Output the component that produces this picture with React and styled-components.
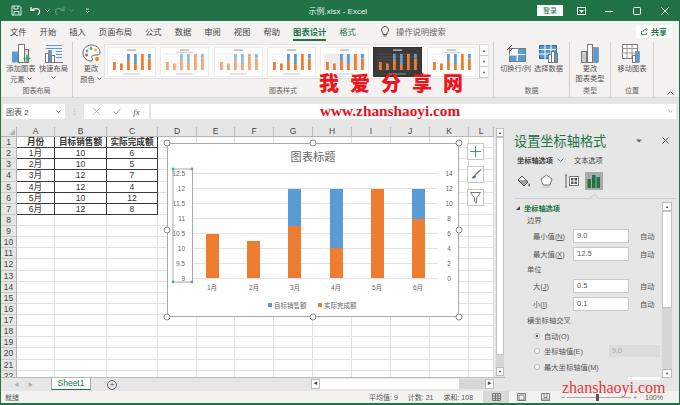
import styled, { createGlobalStyle } from 'styled-components'

const GlobalStyle = createGlobalStyle`
  html, body {
    margin: 0;
    padding: 0;
    background: #fff;
  }
  * {
    box-sizing: border-box;
  }
`

const sans = `'Liberation Sans', 'Noto Sans CJK SC', sans-serif`
const green = '#217346'

const Window = styled.div`
  position: relative;
  width: 680px;
  height: 405px;
  overflow: hidden;
  display: flex;
  flex-direction: column;
  background: #e6e6e6;
  border-left: 1px solid ${green};
  border-right: 1px solid ${green};
  border-bottom: 2px solid ${green};
  font-family: ${sans};
  color: #444;
`

/* title bar */
const TitleBar = styled.div`
  height: 21px;
  flex: none;
  display: flex;
  align-items: center;
  background: ${green};
  color: #fff;
  font-size: 8px;
`
const Qat = styled.div`
  width: 308px;
  display: flex;
  align-items: center;
  padding-left: 10px;
  gap: 4px;
`
const DocName = styled.div`
  width: 229px;
  opacity: 0.9;
`
const LoginBtn = styled.div`
  width: 26px;
  height: 11px;
  background: #fff;
  color: ${green};
  font-size: 7px;
  line-height: 11px;
  text-align: center;
`
const WinBtns = styled.div`
  display: flex;
  align-items: center;
  margin-left: 4px;
`
const WinBtn = styled.div`
  width: 28px;
  display: flex;
  justify-content: center;
`

/* ribbon tabs */
const TabRow = styled.div`
  height: 20px;
  flex: none;
  display: flex;
  align-items: center;
  gap: 13px;
  padding-left: 9px;
  padding-right: 7px;
  background: #f3f2f1;
  font-size: 8.3px;
  color: #444;
`
const Tab = styled.div`
  position: relative;
  font-weight: ${(p) => (p.$active ? 700 : 400)};
  color: ${(p) => (p.$green ? green : '#444')};
  &::after {
    content: '';
    display: ${(p) => (p.$active ? 'block' : 'none')};
    position: absolute;
    left: 0;
    right: 0;
    bottom: -4px;
    height: 2px;
    background: ${green};
  }
`
const Search = styled.div`
  display: flex;
  align-items: center;
  gap: 7px;
  margin-left: 12px;
  color: #666;
`
const ShareBtn = styled.div`
  margin-left: auto;
  width: 36px;
  height: 13px;
  display: flex;
  align-items: center;
  justify-content: center;
  gap: 3px;
  background: #fff;
  color: ${green};
  font-weight: 700;
  font-size: 8px;
`

/* ribbon */
const Ribbon = styled.div`
  height: 57px;
  flex: none;
  display: flex;
  background: #f3f2f1;
  border-bottom: 1px solid #d6d6d6;
`
const Group = styled.div`
  width: ${(p) => p.$w}px;
  flex: none;
  display: flex;
  flex-direction: column;
  border-right: 1px solid #d2d0ce;
  margin-top: 1px;
`
const GroupBody = styled.div`
  flex: 1;
  display: flex;
  padding-left: ${(p) => p.$pad || 0}px;
`
const GroupLabel = styled.div`
  height: 11px;
  line-height: 10px;
  text-align: center;
  font-size: 7px;
  color: #666;
`
const RibbonBtn = styled.div`
  width: ${(p) => p.$w}px;
  flex: none;
  display: flex;
  flex-direction: column;
  align-items: center;
  font-size: 7.2px;
  line-height: 10px;
  color: #555;
  white-space: nowrap;
  svg {
    margin-top: 2px;
    margin-bottom: 1px;
  }
`
const Gallery = styled.div`
  width: 385px;
  height: 35px;
  margin-top: 2px;
  display: flex;
  background: #faf9f8;
  border: 1px solid #e4e4e4;
`
const Thumbs = styled.div`
  flex: 1;
  display: flex;
  align-items: center;
  gap: 4.3px;
  padding-left: 2px;
`
const GalleryArrows = styled.div`
  width: 9px;
  flex: none;
  display: flex;
  flex-direction: column;
  border-left: 1px solid #ccc;
  background: #fff;
`
const GalleryArrow = styled.div`
  flex: 1;
  border-bottom: 1px solid #ccc;
  display: flex;
  align-items: center;
  justify-content: center;
  font-size: 4px;
  color: #555;
`
const Collapse = styled.div`
  flex: 1;
  display: flex;
  align-items: flex-end;
  justify-content: flex-end;
  padding: 0 5px 2px 0;
`

/* formula bar */
const FormulaBar = styled.div`
  height: 27px;
  flex: none;
  display: flex;
  align-items: center;
  padding: 0 3px 0 2px;
  background: #e6e6e6;
`
const NameBox = styled.div`
  width: 62px;
  height: 15px;
  display: flex;
  align-items: center;
  justify-content: space-between;
  padding: 0 4px 0 3px;
  background: #fff;
  font-size: 8px;
  color: #555;
`
const Grip = styled.div`
  width: 19px;
  text-align: center;
  color: #aaa;
  font-size: 7px;
  line-height: 7px;
  letter-spacing: 0;
`
const FxBox = styled.div`
  width: 65px;
  height: 15px;
  display: flex;
  align-items: center;
  justify-content: space-around;
  padding: 0 3px;
  background: #fff;
  color: #aaa;
  font-size: 8px;
`
const Fx = styled.span`
  font-family: 'Liberation Serif', serif;
  font-style: italic;
  color: #555;
  font-size: 9px;
`
const FormulaInput = styled.div`
  flex: 1;
  height: 15px;
  margin-left: 2px;
  display: flex;
  align-items: center;
  justify-content: flex-end;
  padding-right: 3px;
  background: #fff;
`

/* main area */
const Main = styled.div`
  flex: 1;
  min-height: 0;
  display: flex;
`
const Sheet = styled.div`
  position: relative;
  width: 504px;
  flex: none;
  display: flex;
  flex-direction: column;
  padding-top: 2px;
`
const SheetBody = styled.div`
  flex: 1;
  min-height: 0;
  display: flex;
`
const Cells = styled.div`
  width: 493px;
  flex: none;
  overflow: hidden;
  background: #fff;
`
const Row = styled.div`
  display: flex;
  height: ${(p) => (p.$head ? '10px' : '11.125px')};
`
const Corner = styled.div`
  width: 16px;
  flex: none;
  background: #e6e6e6;
  border-right: 1px solid #b5b5b5;
  border-bottom: 1px solid #b5b5b5;
  display: flex;
  align-items: flex-end;
  justify-content: flex-end;
  padding: 0 1px 1px 0;
  &::after {
    content: '';
    border-style: solid;
    border-width: 0 0 6px 6px;
    border-color: transparent transparent #b5b5b5 transparent;
  }
`
const ColHead = styled.div`
  width: ${(p) => p.$w}px;
  flex: none;
  background: #e6e6e6;
  border-right: 1px solid #bdbdbd;
  border-bottom: 1px solid #b5b5b5;
  text-align: center;
  font-size: 8.5px;
  line-height: 9px;
  color: #444;
`
const RowHead = styled.div`
  width: 16px;
  flex: none;
  background: #e6e6e6;
  border-right: 1px solid #b5b5b5;
  border-bottom: 1px solid #c8c8c8;
  text-align: center;
  font-size: 8.5px;
  line-height: 11px;
  color: #444;
`
const Cell = styled.div`
  width: ${(p) => p.$w}px;
  flex: none;
  border-right: 1px solid ${(p) => (p.$table ? '#3a3a3a' : '#e2e2e2')};
  border-bottom: 1px solid ${(p) => (p.$table ? '#3a3a3a' : '#e2e2e2')};
  text-align: center;
  font-size: 8.6px;
  line-height: 11px;
  font-weight: ${(p) => (p.$bold ? 700 : 400)};
  color: #333;
  white-space: nowrap;
  overflow: hidden;
`
const VScroll = styled.div`
  width: 11px;
  flex: none;
  display: flex;
  flex-direction: column;
  padding: 1px 1px 1px 2px;
  background: #e6e6e6;
`
const VTrack = styled.div`
  flex: 1;
  background: #d6d6d6;
`
const VThumb = styled.div`
  height: ${(p) => p.$h}px;
  background: #fff;
  border: 1px solid #c4c4c4;
`
const ScrollBtn = styled.div`
  height: 9px;
  flex: none;
  background: #fff;
  border: 1px solid #bdbdbd;
  display: flex;
  align-items: center;
  justify-content: center;
  font-size: 4px;
  color: #444;
`
const TabBar = styled.div`
  height: 14px;
  flex: none;
  display: flex;
  align-items: flex-start;
  background: #e6e6e6;
  border-top: 1px solid #b9b9b9;
`
const SheetNav = styled.div`
  width: 50px;
  display: flex;
  gap: 9px;
  padding-left: 13px;
  font-size: 5px;
  line-height: 12px;
  color: #b0b0b0;
`
const SheetTab = styled.div`
  width: 40px;
  height: 12px;
  background: #fff;
  border-bottom: 1px solid ${green};
  border-right: 1px solid #aaa;
  border-left: 1px solid #aaa;
  color: ${green};
  font-size: 8.5px;
  line-height: 11px;
  text-align: center;
`
const AddSheet = styled.div`
  width: 10px;
  height: 10px;
  margin: 2px 0 0 16px;
  border: 1px solid #666;
  border-radius: 50%;
  color: #555;
  font-size: 8px;
  line-height: 7px;
  text-align: center;
`
const HScroll = styled.div`
  margin-left: 194px;
  margin-top: 1px;
  width: 183px;
  height: 10px;
  display: flex;
  background: #d6d6d6;
`
const HBtn = styled.div`
  width: 9px;
  background: #fff;
  border: 1px solid #bdbdbd;
  font-size: 4px;
  line-height: 8px;
  text-align: center;
  color: #444;
`
const HThumb = styled.div`
  width: 139px;
  background: #fff;
  margin-right: 26px;
`

/* chart */
const ChartFrame = styled.div`
  position: absolute;
  left: 166px;
  top: 18px;
  width: 292px;
  height: 174px;
  background: #fff;
  border: 1px solid #a8a8a8;
`
const ChartSvg = styled.svg`
  position: absolute;
  left: -1px;
  top: -1px;
  overflow: visible;
`
const ChartText = styled.text`
  font-family: ${sans};
  font-size: ${(p) => p.$size || 6.5}px;
  fill: #666;
`
const ChartTools = styled.div`
  position: absolute;
  left: 466px;
  top: 18px;
  display: flex;
  flex-direction: column;
  gap: 6px;
`
const ToolBtn = styled.div`
  width: 17px;
  height: 17px;
  background: #fff;
  border: 1px solid #c6c6c6;
  display: flex;
  align-items: center;
  justify-content: center;
`

/* format pane */
const Pane = styled.div`
  flex: 1;
  display: flex;
  flex-direction: column;
  background: #e6e6e6;
  font-size: 7.3px;
  color: #555;
`
const PaneHead = styled.div`
  height: 27px;
  flex: none;
  display: flex;
  align-items: center;
  padding: 4px 10px 0 9px;
  color: ${green};
  font-size: 13.2px;
`
const PaneClose = styled.div`
  margin-left: auto;
  display: flex;
  align-items: center;
  gap: 20px;
`
const PaneTabs = styled.div`
  height: 16px;
  flex: none;
  display: flex;
  align-items: center;
  padding-left: 12px;
  font-size: 7.2px;
`
const PaneTab = styled.span`
  font-weight: ${(p) => (p.$active ? 700 : 400)};
  color: #444;
  margin-left: ${(p) => p.$ml || 0}px;
  margin-right: ${(p) => p.$mr || 0}px;
`
const IconRow = styled.div`
  height: 18px;
  margin-top: 4px;
  flex: none;
  display: flex;
  align-items: center;
  gap: ${(p) => p.$gap || 0}px;
  padding-left: 11px;
`
const PaneIcon = styled.div`
  width: ${(p) => p.$w}px;
  height: 18px;
  flex: none;
  margin-left: ${(p) => p.$ml || 0}px;
  display: flex;
  align-items: center;
  justify-content: center;
  background: ${(p) => (p.$on ? '#a9a9a9' : 'transparent')};
`
const PaneRule = styled.div`
  position: relative;
  height: 1px;
  flex: none;
  margin: 8px 3px 0 9px;
  background: #cfcfcf;
  &::after {
    content: '';
    position: absolute;
    left: 77px;
    top: -3px;
    width: 6px;
    height: 6px;
    background: #e6e6e6;
    border-left: 1px solid #cfcfcf;
    border-top: 1px solid #cfcfcf;
    transform: rotate(45deg);
  }
`
const PaneMain = styled.div`
  height: 181px;
  flex: none;
  display: flex;
`
const PaneForm = styled.div`
  width: 157px;
  flex: none;
  overflow: hidden;
  padding-top: 2px;
`
const SectionHead = styled.div`
  height: 13px;
  display: flex;
  align-items: center;
  gap: 4px;
  padding-left: 11px;
  color: ${green};
  font-weight: 700;
  font-size: 7.2px;
  &::before {
    content: '';
    border-style: solid;
    border-width: 0 0 4px 4px;
    border-color: transparent transparent #444 transparent;
  }
`
const SubHead = styled.div`
  height: ${(p) => p.$h || 13}px;
  line-height: ${(p) => p.$h || 13}px;
  padding-left: 22px;
`
const FieldRow = styled.div`
  height: 18px;
  display: flex;
  align-items: center;
  padding-left: 28px;
`
const FieldLabel = styled.div`
  width: 40px;
  flex: none;
  color: #555;
  u {
    text-underline-offset: 1px;
  }
`
const FieldInput = styled.div`
  width: 56px;
  height: 14px;
  flex: none;
  padding-left: 3px;
  background: #fff;
  border: 1px solid #c8c8c8;
  font-size: 7.5px;
  line-height: 12px;
  color: #555;
`
const AutoText = styled.div`
  margin-left: 11px;
`
const RadioRow = styled.div`
  height: 15.5px;
  display: flex;
  align-items: center;
  padding-left: 29px;
  gap: 4px;
`
const Radio = styled.div`
  width: 6px;
  height: 6px;
  flex: none;
  border-radius: 50%;
  background: #fff;
  border: 1px solid #bbb;
  display: flex;
  align-items: center;
  justify-content: center;
  &::after {
    content: '';
    display: ${(p) => (p.$on ? 'block' : 'none')};
    width: 2px;
    height: 2px;
    border-radius: 50%;
    background: #333;
  }
`
const AxisValue = styled.div`
  width: 51px;
  height: 12px;
  margin-left: auto;
  margin-right: 2px;
  padding-left: 3px;
  background: #dcdcdc;
  color: #aaa;
  line-height: 12px;
`
const CutInput = styled.div`
  width: 32px;
  height: 14px;
  margin: 2px 0 0 123px;
  background: #fff;
`
const PaneScroll = styled.div`
  width: 10px;
  flex: none;
  margin: 3px 0 2px;
  display: flex;
  flex-direction: column;
  background: #d6d6d6;
`

/* status bar */
const StatusBar = styled.div`
  height: 12px;
  flex: none;
  display: flex;
  align-items: center;
  padding-left: 4px;
  background: #f3f2f1;
  font-size: 7px;
  color: #555;
`
const StatusLeft = styled.div`
  width: 364px;
`
const Stat = styled.div`
  margin-right: 10px;
`
const ViewBtn = styled.div`
  width: ${(p) => p.$w}px;
  height: 12px;
  display: flex;
  align-items: center;
  justify-content: center;
  background: ${(p) => (p.$on ? '#d8d8d8' : 'transparent')};
`
const Zoom = styled.div`
  width: 76px;
  margin-left: 4px;
  display: flex;
  align-items: center;
  gap: 2px;
  color: #777;
`
const ZoomTrack = styled.div`
  position: relative;
  flex: 1;
  height: 1px;
  background: #aaa;
  &::after {
    content: '';
    position: absolute;
    left: 29px;
    top: -3px;
    width: 3px;
    height: 7px;
    background: #555;
  }
`
const ZoomValue = styled.div`
  margin-left: 8px;
`

/* watermark text on top of the screenshot */
const MarkCn = styled.div`
  position: absolute;
  left: 318px;
  top: 69px;
  font-family: 'Noto Sans CJK SC', sans-serif;
  font-weight: 900;
  font-size: 20px;
  line-height: 27px;
  letter-spacing: 11px;
  color: #f2141c;
  white-space: nowrap;
`
const MarkUrl = styled.div`
  position: absolute;
  left: 319px;
  top: 103px;
  font-family: 'Liberation Serif', serif;
  font-weight: 700;
  font-size: 15.3px;
  line-height: 15px;
  color: #e8101a;
  white-space: nowrap;
`
const MarkCorner = styled.div`
  position: absolute;
  left: 561px;
  top: 378px;
  font-family: 'Liberation Serif', serif;
  font-size: 16px;
  line-height: 20px;
  color: #e5393c;
  white-space: nowrap;
`

const tabs = ['文件', '开始', '插入', '页面布局', '公式', '数据', '审阅', '视图', '帮助']
const columns = [
  ['A', 38],
  ['B', 52],
  ['C', 51],
  ['D', 39],
  ['E', 38],
  ['F', 39],
  ['G', 39],
  ['H', 39],
  ['I', 39],
  ['J', 39],
  ['K', 39],
  ['L', 25]
]
const tableRows = [
  ['月份', '目标销售额', '实际完成额'],
  ['1月', '10', '6'],
  ['2月', '10', '5'],
  ['3月', '12', '7'],
  ['4月', '12', '4'],
  ['5月', '10', '12'],
  ['6月', '12', '8']
]
const rowNumbers = Array.from({ length: 22 }, (_, i) => i + 1)

const BLUE = '#5b9bd5'
const ORANGE = '#ed7d31'
const bars = [
  { x: 206, top: 234 },
  { x: 247, top: 241 },
  { x: 288, blue: 189, top: 226 },
  { x: 330, blue: 189, top: 248 },
  { x: 371, top: 189 },
  { x: 412, blue: 189, top: 219 }
]
const leftLabels = ['12.5', '12', '11.5', '11', '10.5', '10', '9.5', '9']
const rightLabels = ['14', '12', '10', '8', '6', '4', '2', '0']
const months = [
  [212, '1月'],
  [254, '2月'],
  [295, '3月'],
  [336, '4月'],
  [377, '5月'],
  [418, '6月']
]
const handles = [
  [167, 143],
  [313, 143],
  [459, 143],
  [167, 230],
  [459, 230],
  [167, 317],
  [313, 317],
  [459, 317]
]
const miniBars = [
  [6, 0, 15],
  [13, 0, 16.5],
  [20, 7, 13],
  [27, 7, 17],
  [34, 0, 7],
  [41, 7, 11.5]
]

const ChartDrawing = () => (
  <ChartSvg width='292' height='174' viewBox='167 143 292 174'>
    <ChartText x='313' y='161' textAnchor='middle' $size={11.2}>
      图表标题
    </ChartText>
    {leftLabels.map((label, i) => (
      <g key={label}>
        <line x1='193' x2='438' y1={173.5 + i * 15} y2={173.5 + i * 15} stroke='#e4e4e4' />
        <ChartText x='185' y={176 + i * 15} textAnchor='end'>
          {label}
        </ChartText>
        <ChartText x='449' y={176 + i * 15} textAnchor='middle'>
          {rightLabels[i]}
        </ChartText>
      </g>
    ))}
    {bars.map((b) => (
      <g key={b.x}>
        {b.blue && <rect x={b.x} y={b.blue} width='13' height={b.top - b.blue} fill={BLUE} />}
        <rect x={b.x} y={b.top} width='13' height={278 - b.top} fill={ORANGE} />
      </g>
    ))}
    {months.map(([x, label]) => (
      <ChartText key={label} x={x} y='290' textAnchor='middle'>
        {label}
      </ChartText>
    ))}
    <rect x='268' y='303' width='4' height='4' fill={BLUE} />
    <ChartText x='274' y='307.5'>目标销售额</ChartText>
    <rect x='318' y='303' width='4' height='4' fill={ORANGE} />
    <ChartText x='324' y='307.5'>实际完成额</ChartText>
    <rect x='173' y='169' width='19.5' height='113' fill='none' stroke='#a8a8a8' />
    {[[173, 169], [192, 169], [173, 282], [192, 282]].map(([cx, cy]) => (
      <circle key={`${cx}-${cy}`} cx={cx} cy={cy} r='1.4' fill='#5b9bd5' />
    ))}
    {handles.map(([cx, cy]) => (
      <circle key={`${cx}-${cy}`} cx={cx} cy={cy} r='3' fill='#fff' stroke='#8c8c8c' />
    ))}
  </ChartSvg>
)

const MiniChart = ({ dark, soft, grid, legendTop }) => {
  const orange = soft ? '#f2a779' : ORANGE
  const blue = soft ? '#8fbce3' : BLUE
  const line = dark ? '#666' : '#e2e2e2'
  return (
    <svg width='49' height='30' viewBox='0 0 49 30'>
      <rect x='0.5' y='0.5' width='48' height='29' fill={dark ? '#3a3a3a' : '#fff'} stroke={dark ? '#333' : '#ececec'} />
      <rect x='20' y='2.5' width='9' height='1.2' fill={dark ? '#ccc' : '#aaa'} />
      {legendTop && <rect x='16' y='5' width='17' height='0.8' fill='#c4c4c4' />}
      {grid && <rect x='4' y='7' width='41' height='16' fill='#efefef' />}
      {[7, 10, 13, 16, 19, 22].map((y) => (
        <line key={y} x1='4' x2='45' y1={y} y2={y} stroke={line} strokeWidth='0.5' />
      ))}
      {miniBars.map(([x, b, t]) => (
        <g key={x}>
          {b > 0 && <rect x={x} y={b} width='2.8' height={t - b} fill={blue} />}
          <rect x={x} y={t} width='2.8' height={23 - t} fill={orange} />
        </g>
      ))}
      <rect x='16' y='26.5' width='17' height='0.9' fill={dark ? '#999' : '#c4c4c4'} />
    </svg>
  )
}

const AddElementIcon = () => (
  <svg width='22' height='19' viewBox='0 0 22 19'>
    <rect x='2' y='7.5' width='6' height='11' fill={BLUE} />
    <rect x='8.5' y='0.5' width='6' height='18' fill='#fff' stroke='#777' />
    <rect x='14.5' y='5.5' width='4' height='13' fill='#ddd' stroke='#777' />
    <path d='M17 11v7M13.5 14.5h7' stroke='#3aa35f' strokeWidth='1.4' />
  </svg>
)
const QuickLayoutIcon = () => (
  <svg width='20' height='19' viewBox='0 0 20 19'>
    <path d='M2 1.5h16M2 4.5h16M12 7.5h6M12 10.5h6M12 13.5h6' stroke={BLUE} />
    <rect x='1.5' y='9.5' width='3' height='9' fill='#fff' stroke='#777' />
    <rect x='4.5' y='6.5' width='3' height='12' fill={BLUE} stroke='#777' strokeWidth='0.5' />
    <rect x='7.5' y='11.5' width='3' height='7' fill='#fff' stroke='#777' />
    <path d='M1 18.5h18' stroke='#777' />
  </svg>
)
const PaletteIcon = () => (
  <svg width='19' height='19' viewBox='0 0 19 19'>
    <path d='M9 1C4 1 1 5 1 9c0 4 3 8 8 8 2 0 2-2 1-3s0-3 2-3h3c2 0 3-1 3-3 0-4-4-7-9-7z' fill='#fff' stroke='#666' />
    <circle cx='5' cy='7' r='1.4' fill={BLUE} />
    <circle cx='9' cy='4.5' r='1.4' fill='#4aa564' />
    <circle cx='13.5' cy='6' r='1.4' fill='#f2b705' />
    <circle cx='4.5' cy='11' r='1.4' fill='#e23b3b' />
    <circle cx='15' cy='15' r='2' fill={ORANGE} />
  </svg>
)
const SwitchIcon = () => (
  <svg width='20' height='19' viewBox='0 0 20 19'>
    <rect x='3.5' y='4.5' width='16' height='13' fill='#fff' stroke='#777' />
    <rect x='4' y='11' width='7' height='6' fill={BLUE} />
    <rect x='12' y='5' width='7' height='5' fill={BLUE} />
    <rect x='12' y='11' width='7' height='6' fill={BLUE} />
    <path d='M10 11H3M11 5v12' stroke='#fff' />
    <path d='M1 6l5-5M3 8l4-4' stroke='#555' fill='none' />
  </svg>
)
const SelectDataIcon = () => (
  <svg width='20' height='19' viewBox='0 0 20 19'>
    <rect x='0.5' y='1.5' width='17' height='13' fill={BLUE} stroke='#2f6ea5' />
    <path d='M0 5.5h17M0 10h17M6 1v14M12 1v14' stroke='#fff' />
    <rect x='9.5' y='10.5' width='3' height='8' fill='#fff' stroke='#777' />
    <rect x='12.5' y='7.5' width='3' height='11' fill='#fff' stroke='#777' />
    <rect x='15.5' y='9.5' width='3' height='9' fill={BLUE} stroke='#777' />
  </svg>
)
const ChangeTypeIcon = () => (
  <svg width='18' height='19' viewBox='0 0 18 19'>
    <rect x='0.5' y='7.5' width='5' height='11' fill='#ccc' stroke='#777' />
    <rect x='6.5' y='0.5' width='5' height='18' fill='#fff' stroke='#777' />
    <rect x='12.5' y='3.5' width='5' height='15' fill={BLUE} stroke='#777' strokeWidth='0.5' />
  </svg>
)
const MoveChartIcon = () => (
  <svg width='20' height='19' viewBox='0 0 20 19'>
    <rect x='0.5' y='0.5' width='15' height='14' fill='#fff' stroke='#777' />
    <path d='M0 4.5h15M0 9h15M5 1v14M10 1v14' stroke='#999' />
    <rect x='10.5' y='11.5' width='3' height='7' fill='#fff' stroke='#777' />
    <rect x='13.5' y='7.5' width='4' height='11' fill={BLUE} stroke='#777' strokeWidth='0.5' />
  </svg>
)
const Chevron = ({ color = '#666' }) => (
  <svg width='5' height='3' viewBox='0 0 5 3'>
    <path d='M0.5 0.5L2.5 2.5L4.5 0.5' fill='none' stroke={color} />
  </svg>
)

const LabelCaret = styled.span`
  margin-left: 2px;
  display: inline-block;
  vertical-align: 1px;
`
const QatGap = styled.span`
  width: ${(p) => p.$w}px;
  flex: none;
`

const Field = ({ label, hot, value }) => (
  <FieldRow>
    <FieldLabel>
      {label}(<u>{hot}</u>)
    </FieldLabel>
    <FieldInput>{value}</FieldInput>
    <AutoText>自动</AutoText>
  </FieldRow>
)

const App = () => (
  <>
    <GlobalStyle />
    <Window>
      <TitleBar>
        <Qat>
          <svg width='11' height='11' viewBox='0 0 11 11'>
            <path d='M1 1h7.5L10 2.5V10H1z M3 1v3h4V1 M3 10V6.500h5V10' fill='none' stroke='#dbe9e0' />
          </svg>
          <svg style={{ marginLeft: 4 }} width='11' height='10' viewBox='0 0 11 10'>
            <path d='M1 1v3.500h3.500M1.500 4.500C4 1.500 10 2 9.500 6c-.2 1.500-1 2.500-2 3' fill='none' stroke='#fff' strokeWidth='1.2' />
          </svg>
          <Chevron color='#cfe0d5' />
          <svg width='11' height='10' viewBox='0 0 11 10'>
            <path d='M10 1v3.500H6.500M9.500 4.500C7 1.500 1 2 1.500 6c.2 1.500 1 2.500 2 3' fill='none' stroke='#5f9a7a' strokeWidth='1.2' />
          </svg>
          <Chevron color='#5f9a7a' />
          <QatGap $w={3} />
          <svg width='5' height='5' viewBox='0 0 5 5'>
            <path d='M1 1h3M1 3l1.500 1.500L4 3' fill='none' stroke='#cfe0d5' />
          </svg>
        </Qat>
        <DocName>示例.xlsx  -  Excel</DocName>
        <LoginBtn>登录</LoginBtn>
        <WinBtns>
          <WinBtn>
            <svg width='9' height='8' viewBox='0 0 9 8'>
              <rect x='0.500' y='0.500' width='8' height='7' fill='none' stroke='#fff' />
              <path d='M2 3h5L4.500 6z' fill='#fff' />
            </svg>
          </WinBtn>
          <WinBtn>
            <svg width='8' height='8' viewBox='0 0 8 8'>
              <path d='M0 4.500h8' stroke='#fff' />
            </svg>
          </WinBtn>
          <WinBtn>
            <svg width='8' height='8' viewBox='0 0 8 8'>
              <rect x='0.500' y='0.500' width='7' height='7' rx='1' fill='none' stroke='#fff' />
            </svg>
          </WinBtn>
          <WinBtn>
            <svg width='8' height='8' viewBox='0 0 8 8'>
              <path d='M0.500 0.500l7 7M7.500 0.500l-7 7' stroke='#fff' />
            </svg>
          </WinBtn>
        </WinBtns>
      </TitleBar>

      <TabRow>
        {tabs.map((t) => (
          <Tab key={t}>{t}</Tab>
        ))}
        <Tab $active $green>
          图表设计
        </Tab>
        <Tab $green>格式</Tab>
        <Search>
          <svg width='8' height='11' viewBox='0 0 8 11'>
            <path d='M4 .5a3.500 3.500 0 0 0-2 6.300V8.500h4V6.800A3.500 3.500 0 0 0 4 .5zM2.500 10h3' fill='none' stroke='#555' />
          </svg>
          操作说明搜索
        </Search>
        <ShareBtn>
          <svg width='7' height='7' viewBox='0 0 7 7'>
            <path d='M.5 3v3.500h5V5M2 4c0-2 1.500-2.500 3-2.500M4.500.2L6.500 1.500 4.500 3' fill='none' stroke={green} strokeWidth='0.8' />
          </svg>
          共享
        </ShareBtn>
      </TabRow>

      <Ribbon>
        <Group $w={72}>
          <GroupBody $pad={4}>
            <RibbonBtn $w={32}>
              <AddElementIcon />
              添加图表
              <span>
                元素
                <LabelCaret>
                  <Chevron />
                </LabelCaret>
              </span>
            </RibbonBtn>
            <RibbonBtn $w={33}>
              <QuickLayoutIcon />
              快速布局
              <Chevron />
            </RibbonBtn>
          </GroupBody>
          <GroupLabel>图表布局</GroupLabel>
        </Group>
        <Group $w={421}>
          <GroupBody $pad={5}>
            <RibbonBtn $w={26}>
              <PaletteIcon />
              更改
              <span>
                颜色
                <LabelCaret>
                  <Chevron />
                </LabelCaret>
              </span>
            </RibbonBtn>
            <Gallery>
              <Thumbs>
                <MiniChart />
                <MiniChart legendTop soft />
                <MiniChart soft />
                <MiniChart />
                <MiniChart grid />
                <MiniChart dark />
                <MiniChart legendTop />
              </Thumbs>
              <GalleryArrows>
                <GalleryArrow>▲</GalleryArrow>
                <GalleryArrow>▼</GalleryArrow>
                <GalleryArrow>▼</GalleryArrow>
              </GalleryArrows>
            </Gallery>
          </GroupBody>
          <GroupLabel>图表样式</GroupLabel>
        </Group>
        <Group $w={76}>
          <GroupBody $pad={5}>
            <RibbonBtn $w={33}>
              <SwitchIcon />
              切换行/列
            </RibbonBtn>
            <RibbonBtn $w={33}>
              <SelectDataIcon />
              选择数据
            </RibbonBtn>
          </GroupBody>
          <GroupLabel>数据</GroupLabel>
        </Group>
        <Group $w={41}>
          <GroupBody>
            <RibbonBtn $w={40}>
              <ChangeTypeIcon />
              更改
              <span>图表类型</span>
            </RibbonBtn>
          </GroupBody>
          <GroupLabel>类型</GroupLabel>
        </Group>
        <Group $w={43}>
          <GroupBody>
            <RibbonBtn $w={42}>
              <MoveChartIcon />
              移动图表
            </RibbonBtn>
          </GroupBody>
          <GroupLabel>位置</GroupLabel>
        </Group>
        <Collapse>
          <svg width='7' height='4' viewBox='0 0 7 4'>
            <path d='M.5 3.500L3.500.5l3 3' fill='none' stroke='#555' />
          </svg>
        </Collapse>
      </Ribbon>

      <FormulaBar>
        <NameBox>
          图表 2
          <Chevron />
        </NameBox>
        <Grip>⋮</Grip>
        <FxBox>
          <svg width='7' height='7' viewBox='0 0 7 7'>
            <path d='M.5.500l6 6M6.500.500l-6 6' stroke='#b5b5b5' />
          </svg>
          <svg width='8' height='7' viewBox='0 0 8 7'>
            <path d='M.5 3.500L3 6l4.500-5.500' fill='none' stroke='#b5b5b5' />
          </svg>
          <Fx>fx</Fx>
        </FxBox>
        <FormulaInput>
          <Chevron color='#bbb' />
        </FormulaInput>
      </FormulaBar>

      <Main>
        <Sheet>
          <SheetBody>
            <Cells>
              <Row $head>
                <Corner />
                {columns.map(([name, w]) => (
                  <ColHead key={name} $w={w}>
                    {name}
                  </ColHead>
                ))}
              </Row>
              {rowNumbers.map((n) => (
                <Row key={n}>
                  <RowHead>{n}</RowHead>
                  {columns.map(([name, w], c) => {
                    const value = tableRows[n - 1] && tableRows[n - 1][c]
                    return (
                      <Cell key={name} $w={w} $table={value !== undefined} $bold={n === 1}>
                        {value}
                      </Cell>
                    )
                  })}
                </Row>
              ))}
            </Cells>
            <VScroll>
              <ScrollBtn>▲</ScrollBtn>
              <VTrack>
                <VThumb $h={218} />
              </VTrack>
              <ScrollBtn>▼</ScrollBtn>
            </VScroll>
          </SheetBody>
          <TabBar>
            <SheetNav>
              <span>◀</span>
              <span>▶</span>
            </SheetNav>
            <SheetTab>Sheet1</SheetTab>
            <AddSheet>+</AddSheet>
            <HScroll>
              <HBtn>◀</HBtn>
              <HThumb />
              <HBtn>▶</HBtn>
            </HScroll>
          </TabBar>

          <ChartFrame>
            <ChartDrawing />
          </ChartFrame>
          <ChartTools>
            <ToolBtn>
              <svg width='11' height='11' viewBox='0 0 11 11'>
                <path d='M5.500 0v11M0 5.500h11' stroke='#3fa566' />
              </svg>
            </ToolBtn>
            <ToolBtn>
              <svg width='12' height='11' viewBox='0 0 12 11'>
                <path d='M11 .5L5 6' stroke='#777' strokeWidth='1.2' />
                <path d='M1 9c2 0 2-3 4-3l1 1c0 2-2 3-5 2z' fill='#2f75b5' />
              </svg>
            </ToolBtn>
            <ToolBtn>
              <svg width='11' height='12' viewBox='0 0 11 12'>
                <path d='M.5.500h10L6.500 6v5l-2-1.500V6z' fill='#fff' stroke='#777' />
              </svg>
            </ToolBtn>
          </ChartTools>
        </Sheet>

        <Pane>
          <PaneHead>
            设置坐标轴格式
            <PaneClose>
              <svg width='6' height='4' viewBox='0 0 6 4'>
                <path d='M0 .5h6L3 3.500z' fill='#666' />
              </svg>
              <svg width='7' height='7' viewBox='0 0 7 7'>
                <path d='M.5.500l6 6M6.500.500l-6 6' stroke='#555' />
              </svg>
            </PaneClose>
          </PaneHead>
          <PaneTabs>
            <PaneTab $active $mr={4}>
              坐标轴选项
            </PaneTab>
            <svg width='7' height='4' viewBox='0 0 7 4'>
              <path d='M.5.500l3 3 3-3' fill='none' stroke='#3d8fc9' />
            </svg>
            <PaneTab $ml={10}>文本选项</PaneTab>
          </PaneTabs>
          <IconRow>
            <PaneIcon $w={15}>
              <svg width='14' height='13' viewBox='0 0 14 13'>
                <path d='M5 1l6 6-4 4-6-6z' fill='#fff' stroke='#555' />
                <path d='M1 5h9l1 2-4 4z' fill='#555' opacity='0.55' />
                <path d='M12 8c1 2 1.500 3 .5 3.500S11 10 12 8z' fill='#555' />
              </svg>
            </PaneIcon>
            <PaneIcon $w={23} $ml={4}>
              <svg width='13' height='14' viewBox='0 0 13 14'>
                <path d='M6.500 1L12 5l-2 6H3L1 5z' fill='#fff' stroke='#777' />
                <path d='M3 13h7' stroke='#bbb' />
              </svg>
            </PaneIcon>
            <PaneIcon $w={27}>
              <svg width='14' height='14' viewBox='0 0 14 14'>
                <path d='M1 1v12M0 1h2M0 13h2' stroke='#666' />
                <rect x='4.500' y='2.500' width='9' height='9' fill='#fff' stroke='#777' />
                <rect x='6' y='4' width='2.500' height='2.500' fill='#555' />
                <rect x='9.500' y='4' width='2.500' height='2.500' fill='#555' />
                <rect x='6' y='7.500' width='2.500' height='2.500' fill='#555' />
                <rect x='9.500' y='7.500' width='2.500' height='2.500' fill='#555' />
              </svg>
            </PaneIcon>
            <PaneIcon $w={18} $on>
              <svg width='14' height='13' viewBox='0 0 14 13'>
                <rect x='0.500' y='4' width='3.500' height='9' fill={green} />
                <rect x='5' y='0' width='3.500' height='13' fill={green} />
                <rect x='9.500' y='2' width='3.500' height='11' fill={green} />
              </svg>
            </PaneIcon>
          </IconRow>
          <PaneRule />
          <PaneMain>
            <PaneForm>
              <SectionHead>坐标轴选项</SectionHead>
              <SubHead>边界</SubHead>
              <Field label='最小值' hot='N' value='9.0' />
              <Field label='最大值' hot='X' value='12.5' />
              <SubHead $h={14}>单位</SubHead>
              <Field label='大' hot='J' value='0.5' />
              <Field label='小' hot='I' value='0.1' />
              <SubHead $h={15}>横坐标轴交叉</SubHead>
              <RadioRow>
                <Radio $on />
                自动(O)
              </RadioRow>
              <RadioRow>
                <Radio />
                坐标轴值(E)
                <AxisValue>9.0</AxisValue>
              </RadioRow>
              <RadioRow>
                <Radio />
                最大坐标轴值(M)
              </RadioRow>
              <CutInput />
            </PaneForm>
            <PaneScroll>
              <ScrollBtn>▲</ScrollBtn>
              <VTrack>
                <VThumb $h={97} />
              </VTrack>
              <ScrollBtn>▼</ScrollBtn>
            </PaneScroll>
          </PaneMain>
        </Pane>
      </Main>

      <StatusBar>
        <StatusLeft>就绪</StatusLeft>
        <Stat>平均值: 9</Stat>
        <Stat>计数: 21</Stat>
        <Stat>求和: 108</Stat>
        <ViewBtn $on $w={26}>
          <svg width='9' height='8' viewBox='0 0 9 8'>
            <path d='M.5.500h8v7h-8zM3.500.500v7M6 .500v7M.5 3h8M.5 5.500h8' fill='none' stroke='#555' strokeWidth='0.7' />
          </svg>
        </ViewBtn>
        <ViewBtn $w={24}>
          <svg width='9' height='8' viewBox='0 0 9 8'>
            <path d='M.5.500h8v7h-8zM2 2h5v5H2z' fill='none' stroke='#555' strokeWidth='0.7' />
          </svg>
        </ViewBtn>
        <ViewBtn $w={24}>
          <svg width='9' height='8' viewBox='0 0 9 8'>
            <path d='M.5.500h8v7h-8zM3 .500v4h3v-4M.5 6h8' fill='none' stroke='#555' strokeWidth='0.7' />
          </svg>
        </ViewBtn>
        <Zoom>
          <span>−</span>
          <ZoomTrack />
          <span>+</span>
        </Zoom>
        <ZoomValue>100%</ZoomValue>
      </StatusBar>

      <MarkCn>我爱分享网</MarkCn>
      <MarkUrl>www.zhanshaoyi.com</MarkUrl>
      <MarkCorner>zhanshaoyi.com</MarkCorner>
    </Window>
  </>
)

export default App
